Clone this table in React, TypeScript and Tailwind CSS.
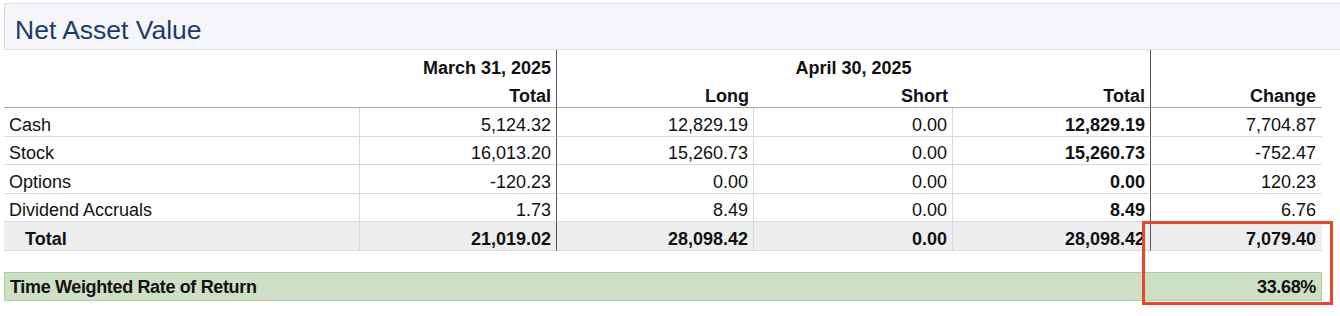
import React from "react";

type Row = {
  label: string;
  march: string;
  long: string;
  short: string;
  total: string;
  change: string;
};

const rows: Row[] = [
  { label: "Cash", march: "5,124.32", long: "12,829.19", short: "0.00", total: "12,829.19", change: "7,704.87" },
  { label: "Stock", march: "16,013.20", long: "15,260.73", short: "0.00", total: "15,260.73", change: "-752.47" },
  { label: "Options", march: "-120.23", long: "0.00", short: "0.00", total: "0.00", change: "120.23" },
  { label: "Dividend Accruals", march: "1.73", long: "8.49", short: "0.00", total: "8.49", change: "6.76" },
];

const cell = "flex items-end leading-5 pb-px";
const num = `${cell} justify-end pr-[5px]`;

export default function App() {
  return (
    <div className="relative w-[1340px] h-[316px] overflow-hidden bg-white text-[18px] text-[#111] font-['Liberation_Sans',Arial,sans-serif]">
      {/* Titre de la section */}
      <div className="mt-[3px] ml-[4px] h-[47px] border border-r-0 border-[#dcdfe3] bg-[#f4f6f9] pl-[10px] pt-[11px]">
        <h1 className="text-[26.5px] leading-[30px] text-[#1d3b6c]">Net Asset Value</h1>
      </div>

      {/* Tableau */}
      <div className="ml-[4px] grid w-[1318px] grid-cols-[356px_197px_197px_199px_198px_171px] grid-rows-[29px_29px_29px_28px_29px_28px_29px] font-normal">
        {/* En-tête ligne 1 */}
        <div />
        <div className={`${num} font-bold border-r border-[#555]`}>March 31, 2025</div>
        <div className={`${cell} col-span-3 justify-center font-bold border-r border-[#555]`}>April 30, 2025</div>
        <div />

        {/* En-tête ligne 2 */}
        <div className="border-b border-[#a6a6a6]" />
        <div className={`${num} font-bold border-b border-b-[#a6a6a6] border-r border-r-[#555]`}>Total</div>
        <div className={`${num} font-bold border-b border-[#a6a6a6]`}>Long</div>
        <div className={`${num} font-bold border-b border-[#a6a6a6]`}>Short</div>
        <div className={`${num} font-bold border-b border-b-[#a6a6a6] border-r border-r-[#555]`}>Total</div>
        <div className={`${num} font-bold border-b border-[#a6a6a6] pr-[6px]`}>Change</div>

        {rows.map((r) => (
          <React.Fragment key={r.label}>
            <div className={`${cell} pl-[5px] border-b border-r border-[#d9d9d9]`}>{r.label}</div>
            <div className={`${num} border-b border-b-[#d9d9d9] border-r border-r-[#555]`}>{r.march}</div>
            <div className={`${num} border-b border-r border-[#d9d9d9]`}>{r.long}</div>
            <div className={`${num} border-b border-r border-[#d9d9d9]`}>{r.short}</div>
            <div className={`${num} font-bold border-b border-b-[#d9d9d9] border-r border-r-[#555]`}>{r.total}</div>
            <div className={`${num} pr-[6px] border-b border-[#d9d9d9]`}>{r.change}</div>
          </React.Fragment>
        ))}

        {/* Ligne des totaux */}
        <div className={`${cell} pl-[21px] font-bold bg-[#eeeeee] border-b border-r border-[#d9d9d9]`}>Total</div>
        <div className={`${num} font-bold bg-[#eeeeee] border-b border-b-[#d9d9d9] border-r border-r-[#555]`}>21,019.02</div>
        <div className={`${num} font-bold bg-[#eeeeee] border-b border-r border-[#d9d9d9]`}>28,098.42</div>
        <div className={`${num} font-bold bg-[#eeeeee] border-b border-r border-[#d9d9d9]`}>0.00</div>
        <div className={`${num} font-bold bg-[#eeeeee] border-b border-b-[#d9d9d9] border-r border-r-[#555] pr-[3px]`}>28,098.42</div>
        <div className={`${num} font-bold bg-[#eeeeee] border-b border-[#d9d9d9] pr-[6px]`}>7,079.40</div>
      </div>

      {/* Rendement pondéré dans le temps */}
      <div className="mt-[21px] ml-[4px] flex h-[29px] w-[1318px] items-center justify-between border border-[#acd199] bg-[#cddfc4] pl-[5px] pr-[5px] font-bold leading-5 tracking-[-0.35px]">
        <span>Time Weighted Rate of Return</span>
        <span>33.68%</span>
      </div>

      {/* Annotation */}
      <div className="absolute left-[1142px] top-[221px] h-[84px] w-[191px] border-[3px] border-[#e8472b]" />
    </div>
  );
}
